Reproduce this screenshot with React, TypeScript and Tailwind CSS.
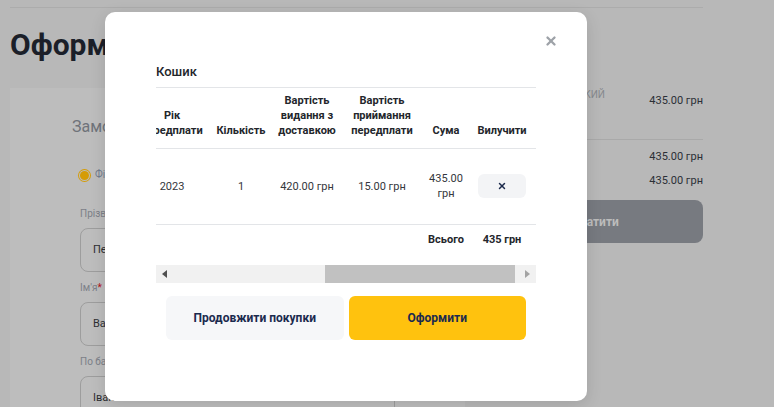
import React from 'react';
import { X } from 'lucide-react';

const Field: React.FC<{ label: string; value: string; required?: boolean; first?: boolean }> = ({ label, value, required, first }) => (
  <div className={first ? 'mt-[25px]' : 'mt-[9px]'}>
    <div className="text-[10px] leading-[14px] text-[#7c8088]">
      {label}
      {required && <span className="text-[#b3121b]">*</span>}
    </div>
    <div className="mt-[7px] h-[44px] w-[315px] rounded-[8px] border border-[#9d9d9d] flex items-center pl-[12px] text-[11px] text-[#2d2f33]">
      {value}
    </div>
  </div>
);

const Page: React.FC = () => (
  <div className="h-[407px] overflow-hidden bg-[#b8b8b8]">
    <div className="ml-[10px] mt-[7px] w-[693px] border-t border-[#acacac]">
      <h1 className="mt-[19px] text-[30px] font-bold leading-[36px] text-[#1b1f29]">Оформлення замовлення</h1>
      <div className="mt-[25px] flex gap-[16px]">
        <div className="h-[330px] w-[455px] bg-[#bdbdbd] pl-[62px] pt-[29px]">
          <div className="text-[16px] leading-[20px] text-[#6f737a]">Замовник</div>
          <div className="ml-[8px] mt-[31px] flex items-center gap-[6px]">
            <span className="h-[9px] w-[9px] rounded-full bg-[#d59c06] ring-1 ring-[#d59c06] ring-offset-1 ring-offset-[#bdbdbd]" />
            <span className="text-[10px] leading-[14px] text-[#717c8f]">Фізична особа</span>
          </div>
          <div className="ml-[8px]">
            <Field first label="Прізвище" required value="Петренко" />
            <Field label="Ім'я" required value="Василь" />
            <Field label="По батькові" value="Іванович" />
          </div>
        </div>
        <div className="w-[222px]">
          <div className="flex items-center justify-between border-b border-[#a9a9a9] pb-[25px]">
            <div className="flex w-[124px] flex-col items-end text-[10px] uppercase leading-[13px] text-[#85888d]">
              <span className="whitespace-nowrap">Вісник Київський</span>
              <span className="self-start whitespace-nowrap">міський</span>
            </div>
            <div className="text-[11px] text-[#2b2f36]">435.00 грн</div>
          </div>
          <div className="mt-[10px] flex justify-between text-[11px] leading-[14px] text-[#2b2f36]">
            <span>Сума</span>
            <span>435.00 грн</span>
          </div>
          <div className="mt-[10px] flex justify-between text-[11px] leading-[14px] text-[#2b2f36]">
            <span>До сплати</span>
            <span>435.00 грн</span>
          </div>
          <div className="mt-[12px] flex h-[43px] items-center justify-center rounded-[8px] bg-[#777a80] text-[12px] font-bold text-[#bcbcbc]">
            Сплатити
          </div>
        </div>
      </div>
    </div>
  </div>
);

const th = 'px-[2px] pb-[10px] align-bottom text-center text-[11px] font-bold leading-[15px] text-[#23262b]';
const td = 'px-[2px] align-middle text-center text-[11px] leading-[15px] text-[#34373c]';

const CartModal: React.FC = () => (
  <div className="absolute left-[105px] top-[12px] h-[389px] w-[482px] rounded-[10px] bg-white px-[51px] pt-[51px] shadow-[0_4px_16px_rgba(0,0,0,0.12)]">
    <button className="absolute right-[29px] top-[22px] text-[#9ea2a8]">
      <X size={14} strokeWidth={4} />
    </button>
    <h2 className="border-b border-[#e3e5e8] pb-[6px] text-[13px] font-medium leading-[18px] text-[#23262b]">Кошик</h2>
    <div className="w-[380px] overflow-hidden">
      <table className="ml-[-306px] w-[686px] table-fixed border-collapse">
        <colgroup>
          <col className="w-[200px]" />
          <col className="w-[86px]" />
          <col className="w-[72px]" />
          <col className="w-[66px]" />
          <col className="w-[66px]" />
          <col className="w-[84px]" />
          <col className="w-[44px]" />
          <col className="w-[68px]" />
        </colgroup>
        <thead>
          <tr className="h-[60px] border-b border-[#e3e5e8]">
            <th className={th}>Видання</th>
            <th className={th}>Індекс</th>
            <th className={th}>Рік передплати</th>
            <th className={th}>Кількість</th>
            <th className={th}>Вартість видання з доставкою</th>
            <th className={th}>Вартість приймання передплати</th>
            <th className={th}>Сума</th>
            <th className={th}>Вилучити</th>
          </tr>
        </thead>
        <tbody>
          <tr className="h-[76px] border-b border-[#e3e5e8]">
            <td className={td}>Київський вісник</td>
            <td className={td}>60123</td>
            <td className={td}>2023</td>
            <td className={td}>1</td>
            <td className={td}>420.00 грн</td>
            <td className={td}>15.00 грн</td>
            <td className={td}>435.00 грн</td>
            <td className={td}>
              <button className="mx-auto flex h-[24px] w-[48px] items-center justify-center rounded-[6px] bg-[#f3f4f6] text-[#1d2b4c]">
                <X size={10} strokeWidth={3.5} />
              </button>
            </td>
          </tr>
          <tr className="h-[32px]">
            <td colSpan={6} />
            <td className="px-[2px] text-center text-[11px] font-bold text-[#23262b]">Всього</td>
            <td className="px-[2px] text-center text-[11px] font-bold text-[#23262b]">435 грн</td>
          </tr>
        </tbody>
      </table>
    </div>
    <div className="mt-[9px] flex h-[18px] w-[380px] bg-[#f1f1f1]">
      <div className="flex w-[17px] items-center justify-center">
        <svg width="5" height="8" viewBox="0 0 5 8"><path d="M5 0 L0 4 L5 8 Z" fill="#505050" /></svg>
      </div>
      <div className="flex-1">
        <div className="ml-[152px] h-full w-[190px] bg-[#c1c1c1]" />
      </div>
      <div className="flex w-[17px] items-center justify-center">
        <svg width="5" height="8" viewBox="0 0 5 8"><path d="M0 0 L5 4 L0 8 Z" fill="#a3a3a3" /></svg>
      </div>
    </div>
    <div className="mt-[13px] flex gap-[5px] px-[10px]">
      <button className="h-[44px] flex-1 rounded-[6px] bg-[#f6f7f9] text-[12px] font-bold text-[#1b2a4e]">Продовжити покупки</button>
      <button className="h-[44px] flex-1 rounded-[6px] bg-[#ffc20e] text-[12px] font-bold text-[#1b2a4e]">Оформити</button>
    </div>
  </div>
);

export default function App() {
  return (
    <div className="relative h-[407px] w-[774px] overflow-hidden font-['Roboto',sans-serif]">
      <Page />
      <CartModal />
    </div>
  );
}
